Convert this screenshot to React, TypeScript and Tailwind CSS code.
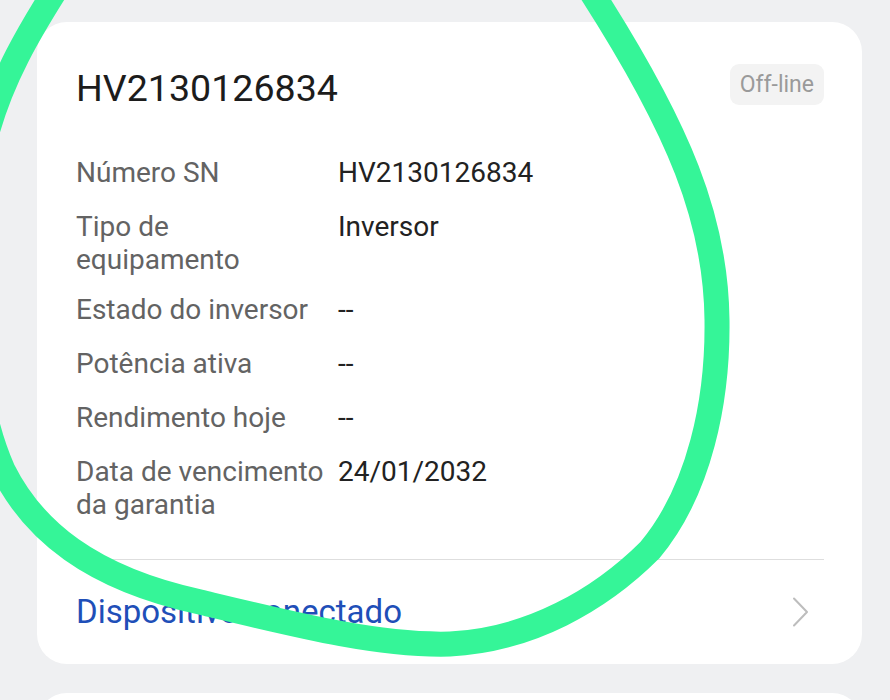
const ROWS: { label: React.ReactNode; value: string; tight?: boolean }[] = [
  { label: 'Número SN', value: 'HV2130126834' },
  { label: <>Tipo de<br />equipamento</>, value: 'Inversor', tight: true },
  { label: 'Estado do inversor', value: '--' },
  { label: 'Potência ativa', value: '--' },
  { label: 'Rendimento hoje', value: '--' },
  { label: <>Data de vencimento<br />da garantia</>, value: '24/01/2032' },
]

function Chevron() {
  return (
    <svg width="17" height="30" viewBox="0 0 17 30" fill="none">
      <polyline points="2,1.5 15,15 2,28.5" stroke="#bdbdbd" strokeWidth="2" strokeLinecap="round" strokeLinejoin="round" />
    </svg>
  )
}

export default function App() {
  return (
    <div
      className="relative h-[700px] w-[890px] overflow-hidden bg-[#eff0f2]"
      style={{ fontFamily: 'Roboto, "Noto Sans", sans-serif' }}
    >
      <div className="pt-[22px] pl-[37px]">
        <div className="w-[825px] rounded-[30px] bg-white pl-[39px] pr-[38px] pt-[44px] pb-[31px]">
          {/* header */}
          <div className="flex items-center justify-between">
            <h1 className="text-[37.6px] leading-[44px] text-[#1c1c1c]">HV2130126834</h1>
            <span className="-mt-[7px] rounded-[9px] bg-[#f3f3f3] px-[10px] py-[7px] text-[23px] leading-[27px] text-[#9a9a9a]">
              Off-line
            </span>
          </div>

          {/* details */}
          <div className="mt-[46px] flex flex-col gap-[21px]">
            {ROWS.map((r, i) => (
              <div key={i} className={`flex text-[28px] leading-[33px] ${r.tight ? '-mb-[4px]' : ''}`}>
                <div className="w-[262px] shrink-0 text-[#636363]">{r.label}</div>
                <div className="text-[#222]">{r.value}</div>
              </div>
            ))}
          </div>

          <div className="mt-[38px] h-px bg-[#dedede]" />

          {/* link row */}
          <div className="mt-[31px] flex items-center justify-between">
            <span className="text-[33px] leading-[42px] text-[#1f4fb8]">Dispositivo conectado</span>
            <span className="mr-[15px] flex items-center">
              <Chevron />
            </span>
          </div>
        </div>

        {/* next card peeking */}
        <div className="mt-[29px] h-[40px] w-[825px] rounded-t-[30px] bg-white" />
      </div>

      {/* hand-drawn annotation */}
      <svg className="pointer-events-none absolute inset-0" width="890" height="700" viewBox="0 0 890 700" fill="none">
        <path
          d="M 62 -20 C 30 30, 0 80, -15 140 C -40 280, -28 400, 3 470 C 33 530, 90 578, 200 602 C 300 626, 380 646, 450 644 C 530 640, 600 600, 650 550 C 700 490, 718 400, 717 320 C 716 220, 680 130, 590 -10"
          stroke="#35f598"
          strokeWidth="25"
          strokeLinecap="round"
          strokeLinejoin="round"
        />
      </svg>
    </div>
  )
}
